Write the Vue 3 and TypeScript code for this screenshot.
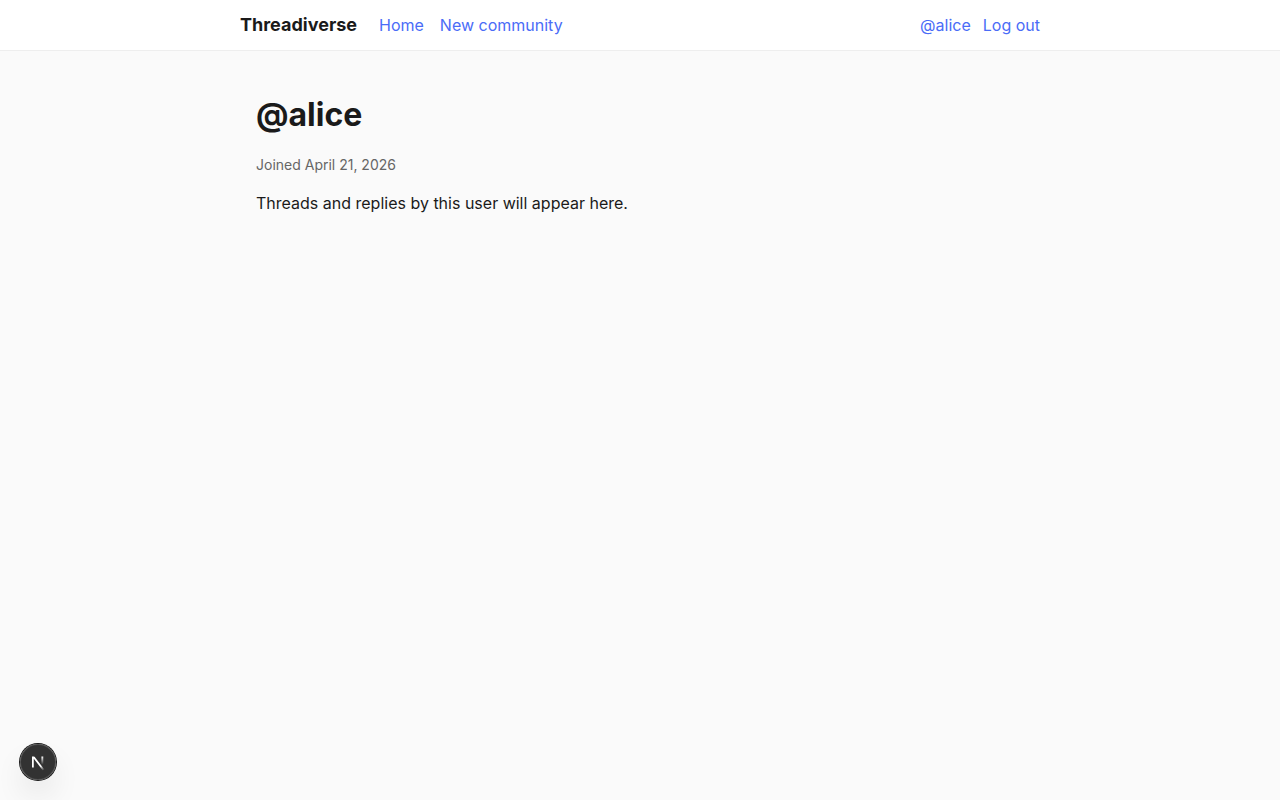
<script setup lang="ts">
interface NavLink {
  label: string
  href: string
}

const links: NavLink[] = [
  { label: 'Home', href: '#home' },
  { label: 'New community', href: '#new-community' },
]
const username = 'alice'
const joined = 'April 21, 2026'
</script>

<template>
  <header class="site-header">
    <div class="bar">
      <a class="brand" href="#home">Threadiverse</a>
      <nav class="links">
        <a v-for="link in links" :key="link.href" :href="link.href">{{ link.label }}</a>
      </nav>
      <div class="account">
        <a href="#profile">@{{ username }}</a>
        <button type="button" class="logout">Log out</button>
      </div>
    </div>
  </header>

  <main class="profile">
    <h1>@{{ username }}</h1>
    <p class="joined">Joined {{ joined }}</p>
    <p>Threads and replies by this user will appear here.</p>
  </main>

  <button type="button" class="dev-tools" aria-label="Open dev tools">
    <svg width="40" height="40" viewBox="0 0 40 40" fill="none" aria-hidden="true">
      <defs>
        <linearGradient id="diagonal" x1="9.95555" y1="11.1226" x2="15.4778" y2="17.9671" gradientUnits="userSpaceOnUse">
          <stop stop-color="white" />
          <stop offset="0.604072" stop-color="white" stop-opacity="0" />
          <stop offset="1" stop-color="white" stop-opacity="0" />
        </linearGradient>
        <linearGradient id="upright" x1="11.8222" y1="1.40039" x2="11.791" y2="9.62542" gradientUnits="userSpaceOnUse">
          <stop stop-color="white" />
          <stop offset="1" stop-color="white" stop-opacity="0" />
        </linearGradient>
        <mask id="corner">
          <rect width="100%" height="100%" fill="white" />
          <rect width="5" height="1.5" fill="black" />
        </mask>
      </defs>
      <g transform="translate(12.5 13)">
        <path d="M13.3 15.2 L2.34 1 V12.6" stroke="url(#diagonal)" stroke-width="1.86" mask="url(#corner)" />
        <path d="M11.825 1.5 V13.1" stroke="url(#upright)" stroke-width="1.86" />
      </g>
    </svg>
  </button>
</template>

<style>
body {
  margin: 0;
  background: #fafafa;
  color: #1a1a1a;
  font-family: Inter, "Liberation Sans", sans-serif;
  font-size: 16px;
  line-height: 24px;
}
</style>

<style scoped>
a,
.logout {
  color: #4a6cf7;
  text-decoration: none;
}

.site-header {
  background: #fff;
  border-bottom: 1px solid #eee;
  padding: 12px 16px;
}

.bar {
  display: flex;
  align-items: center;
  max-width: 800px;
  margin: 0 auto;
  line-height: 26px;
}

.brand {
  color: #1a1a1a;
  font-size: 18px;
  font-weight: 700;
  margin-right: 22px;
}

.links {
  display: flex;
  gap: 16px;
}

.account {
  display: flex;
  gap: 12px;
  margin-left: auto;
}

.logout {
  border: 0;
  padding: 0;
  background: none;
  font: inherit;
  cursor: pointer;
}

.profile {
  box-sizing: border-box;
  max-width: 800px;
  margin: 0 auto;
  padding: 40px 16px;
}

h1 {
  margin: 0;
  font-size: 32px;
  line-height: 48px;
  font-weight: 700;
}

p {
  margin: 14px 0;
}

.joined {
  color: #666;
  font-size: 14px;
}

.dev-tools {
  position: fixed;
  left: 20px;
  bottom: 20px;
  width: 36px;
  height: 36px;
  display: flex;
  align-items: center;
  justify-content: center;
  padding: 0;
  border: 0;
  border-radius: 50%;
  background: rgba(0, 0, 0, 0.8);
  box-shadow:
    0 0 0 1px #171717,
    inset 0 0 0 1px hsla(0, 0%, 100%, 0.14),
    0 16px 32px -8px rgba(0, 0, 0, 0.24);
  cursor: pointer;
}

.dev-tools svg {
  flex: none;
}
</style>
